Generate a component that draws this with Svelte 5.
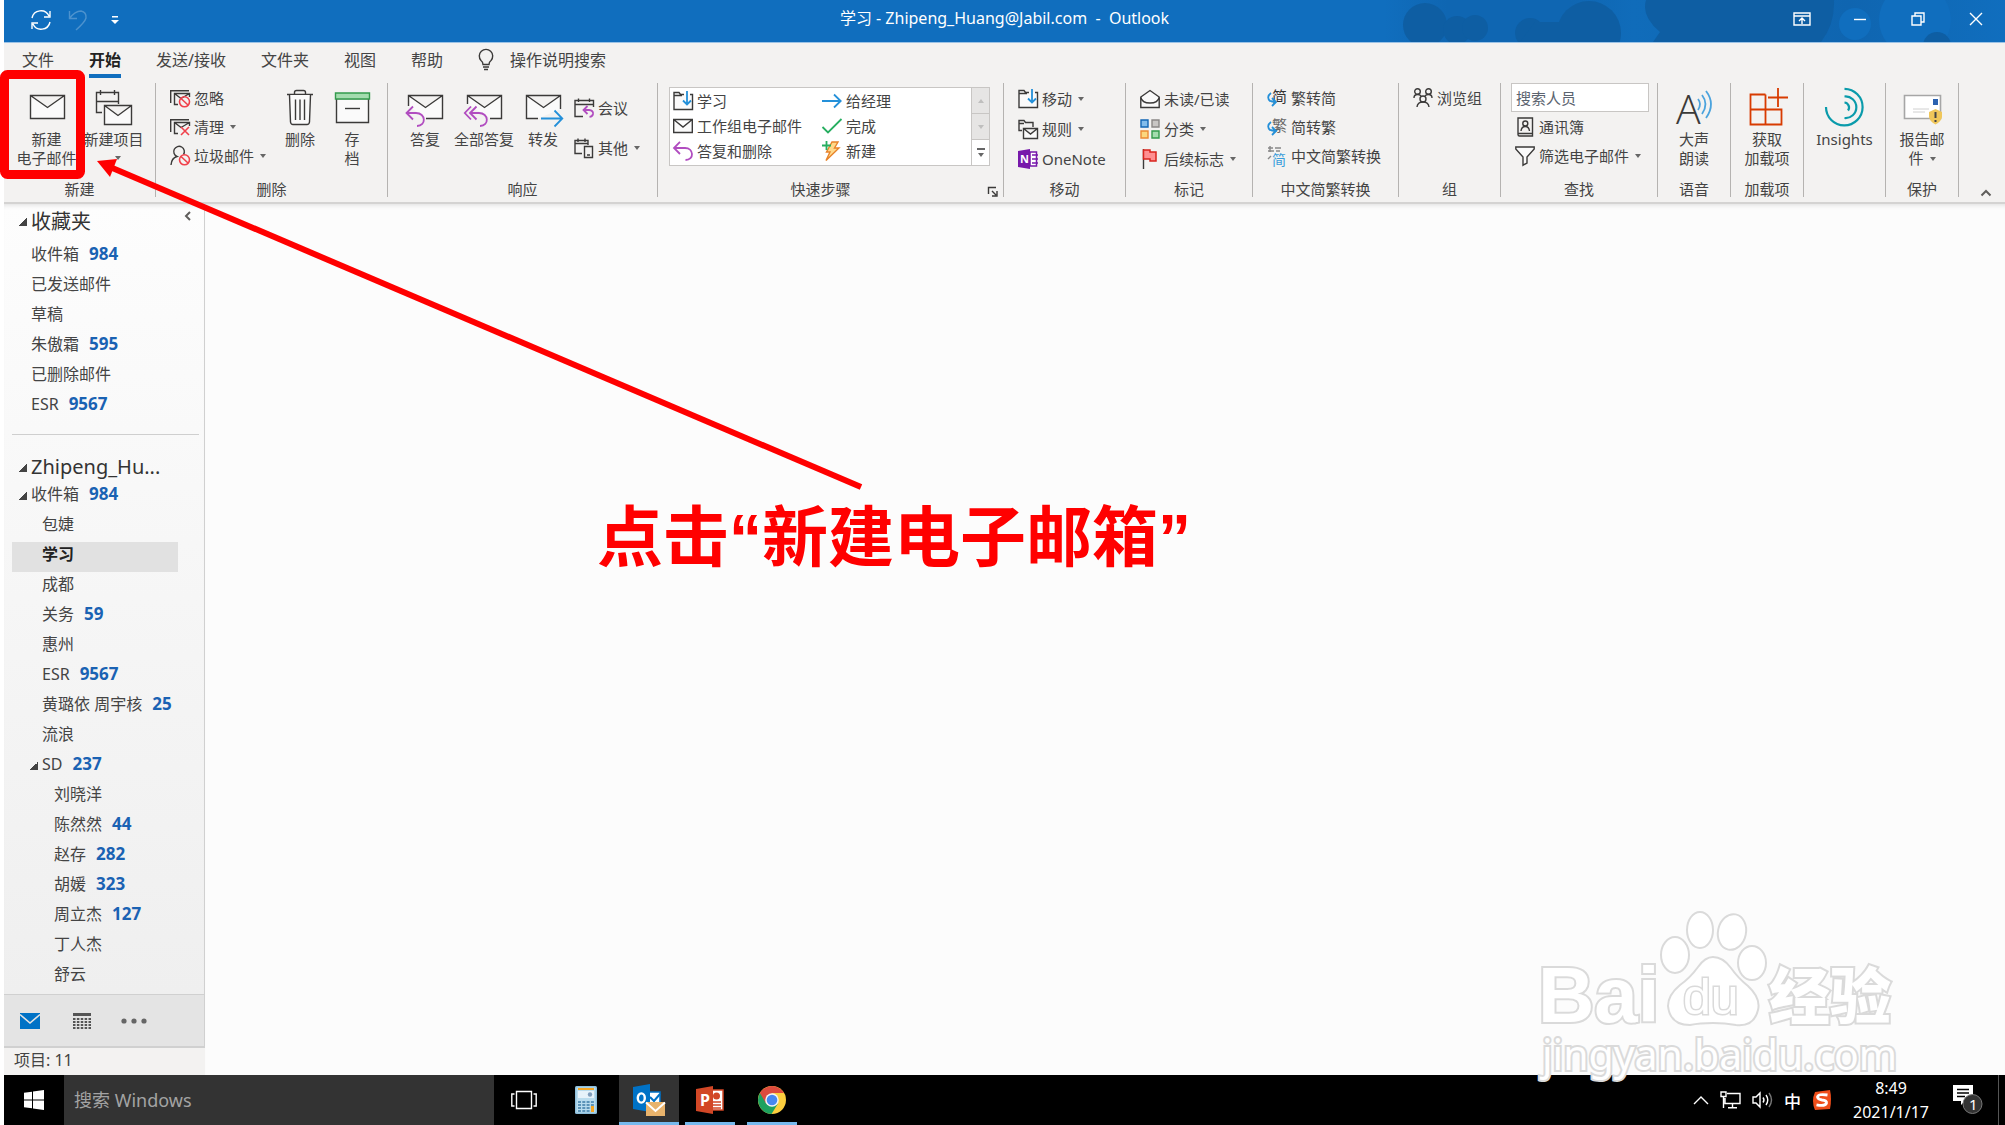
<script>
    const tabs = ["文件", "开始", "发送/接收", "文件夹", "视图", "帮助"];
    let activeTab = $state("开始");

    const quickSteps = [
        { icon: "moveTo", text: "学习" },
        { icon: "arrowRight", text: "给经理" },
        { icon: "mailSmall", text: "工作组电子邮件" },
        { icon: "check", text: "完成" },
        { icon: "replySmall", text: "答复和删除" },
        { icon: "bolt", text: "新建" },
    ];

    const favorites = [
        { name: "收件箱", count: 984 },
        { name: "已发送邮件" },
        { name: "草稿" },
        { name: "朱傲霜", count: 595 },
        { name: "已删除邮件" },
        { name: "ESR", count: 9567 },
    ];

    // level: indent depth, open: draws the expanded triangle
    const folders = [
        { name: "收件箱", count: 984, level: 0, open: true },
        { name: "包婕", level: 1 },
        { name: "学习", level: 1 },
        { name: "成都", level: 1 },
        { name: "关务", count: 59, level: 1 },
        { name: "惠州", level: 1 },
        { name: "ESR", count: 9567, level: 1 },
        { name: "黄璐依 周宇核", count: 25, level: 1 },
        { name: "流浪", level: 1 },
        { name: "SD", count: 237, level: 1, open: true },
        { name: "刘晓洋", level: 2 },
        { name: "陈然然", count: 44, level: 2 },
        { name: "赵存", count: 282, level: 2 },
        { name: "胡媛", count: 323, level: 2 },
        { name: "周立杰", count: 127, level: 2 },
        { name: "丁人杰", level: 2 },
        { name: "舒云", level: 2 },
    ];
    let selected = $state("学习");
</script>

{#snippet bigIcon(name)}
    <svg class="big-icon" viewBox="0 0 40 40" aria-hidden="true">
        {#if name === "mail"}
            <path class="ln paper" d="M3.5 8.5H37.5V31.5H3.5Z M3.5 8.5L20.5 20.5L37.5 8.5" />
        {:else if name === "newItems"}
            <path class="ln" d="M8 25.5H2.5V5.5H24.5V17 M2.5 14.5H24.5 M6.5 3V8 M20.5 3V8" />
            <path class="ln paper" d="M10.5 18.5H37.5V37.5H10.5Z M10.5 18.5L24 28.5L37.5 18.5" />
        {:else if name === "trash"}
            <path class="ln" d="M7 7.5H33 M14.5 7V5.5Q14.5 3.5 16.5 3.5H23.5Q25.5 3.5 25.5 5.5V7" />
            <path class="ln paper" d="M9.5 8L10.5 35Q10.8 37.5 13 37.5H27Q29.2 37.5 29.5 35L30.5 8" />
            <path class="ln" d="M15.5 12.5V33 M20 12.5V33 M24.5 12.5V33" />
        {:else if name === "archive"}
            <path class="ln paper" d="M4.5 11.5H36.5V35.5H4.5Z" />
            <path d="M3.5 6H37.5V12H3.5Z" fill="#a3dcae" stroke="#339a4c" stroke-width="1.4" />
            <path class="ln" d="M13 21.5H28" />
        {:else if name === "reply"}
            <path class="ln paper" d="M3.5 19V8.5H37.5V31.5H21 M3.5 8.5L20.5 20.5L37.5 8.5" />
            <path class="ln purple" d="M8 19.5L1.5 26L8 32.5 M1.5 26H11C21 26 21.5 39 12 39" />
        {:else if name === "replyAll"}
            <path class="ln paper" d="M3.5 17V8.5H37.5V31.5H26 M3.5 8.5L20.5 20.5L37.5 8.5" />
            <path class="ln purple" d="M7 19.5L.8 26L7 32.5 M12.5 19.5L6 26L12.5 32.5 M6 26H15C25 26 25.5 39 16 39" />
        {:else if name === "forward"}
            <path class="ln paper" d="M15 31.5H3.5V8.5H37.5V22 M3.5 8.5L20.5 20.5L37.5 8.5" />
            <path class="ln blue" d="M18 31.5H39 M31.5 23.5L39.3 31.5L31.5 39.5" />
        {:else if name === "speak"}
            <text x="2" y="37" class="letter-a">A</text>
            <path class="ln sky" d="M24 12Q28 17 24 23 M28 8Q35 17 28 27 M32 4Q42 17 32 31" />
        {:else if name === "addins"}
            <path class="ln orange" d="M18.5 7.5H3.5V37.5H34.5V22.5H3.5 M18.5 7.5V37.5 M31 1V20 M21 10.5H41" />
        {:else if name === "insights"}
            <path class="ln teal" d="M2 20A18.3 18.3 0 1 0 20.5 1.8 M20.5 9.5A10.8 10.8 0 1 1 20.5 31 M20.5 15.5A5 5 0 0 1 24 23.5" />
        {:else if name === "report"}
            <path d="M2.5 8.5H38.5V31.5H2.5Z" fill="#fff" stroke="#a6a6a6" stroke-width="1.6" />
            <path d="M11 22H27 M11 25H23" stroke="#d0d0d0" fill="none" />
            <path d="M31 12H36V18H31Z" fill="#2b62b0" />
            <path d="M33.5 22L40 25V30Q39 35 33.5 37.5Q28 35 27 30V25Z" fill="#f0c75a" />
            <path d="M33.5 25V31 M33.5 33V35" stroke="#444" stroke-width="2" />
        {/if}
    </svg>
{/snippet}

{#snippet smallIcon(name)}
    <svg class="small-icon" viewBox="0 0 20 20" aria-hidden="true">
        {#if name === "ignore" || name === "clean"}
            <path class="ln" d="M.7 15V2.7H19 M8 16.5H4.5V5.5H19.5V9 M4.5 5.5L11 10.5L19.5 5.5" />
            {#if name === "ignore"}
                <circle cx="14.5" cy="13.8" r="5" class="ln red" /><path class="ln red" d="M11 10.5L18 17" />
            {:else}
                <path class="ln red" d="M11 10L19 18 M19 10L11 18" />
            {/if}
        {:else if name === "junk"}
            <path class="ln" d="M1 19Q1.5 12 7 10.5A5.3 5.3 0 1 1 13.5 8.5" />
            <circle cx="14.5" cy="13.8" r="5" class="ln red" /><path class="ln red" d="M11 10.5L18 17" />
        {:else if name === "meeting"}
            <path class="ln" d="M9 18.5H1V2.5H19.5V9 M1 6.5H19.5 M4.5 .5V4 M15.5 .5V4" />
            <path class="ln purple" d="M13.5 8L9.5 12L13.5 16 M9.5 12H15Q19.5 12.5 19 16Q18.5 18.5 15.5 18.8" />
        {:else if name === "other"}
            <path class="ln" d="M8 15.5H1V2.5H14V7 M1 5.5H14 M4 .5V4 M11 .5V4 M10.5 8.5H18.5V19.5H10.5Z M13 17H16" />
        {:else if name === "move" || name === "moveTo"}
            <path class="ln paper" d="M11 3.5H7.5L6 1.5H1V18.5H19.5V3.5H17 M1 4.5H9" />
            <path class="ln blue" d="M14 0V13 M10 9.5L14 13.5L18 9.5" />
        {:else if name === "mailSmall"}
            <path class="ln paper" d="M.7 3.5H19.3V16.5H.7Z M.7 3.5L10 11L19.3 3.5" />
        {:else if name === "replySmall"}
            <path class="ln purple" d="M7 .8L1 7L7 13 M1 7H12C21 7 21.5 19 12.5 19" />
        {:else if name === "arrowRight"}
            <path class="ln blue" d="M0 10H18.5 M12 3.5L18.7 10L12 16.5" />
        {:else if name === "check"}
            <path class="ln green" d="M.5 11L6 16.5L19.5 3" />
        {:else if name === "bolt"}
            <path d="M10 1H16L12.5 7H17L4 19.5L8 11H4.5Z" fill="#ffd98a" stroke="#e8832a" stroke-width="1.4" />
            <path class="ln green" d="M4.5 0V9 M0 4.5H9" />
        {:else if name === "rules"}
            <path class="ln" d="M4 11.5H1V1.5H6L7.5 3.5H15V8 M1 4.5H6" />
            <path class="ln paper" d="M5.5 9.5H19.5V19.5H5.5Z M5.5 9.5L12.5 15L19.5 9.5" />
        {:else if name === "onenote"}
            <path d="M12 3H18.5V17H12Z" fill="#fff" stroke="#7719aa" stroke-width="1.5" />
            <path d="M14 6H20 M14 10H20 M14 14H20" stroke="#7719aa" stroke-width="1.5" />
            <path d="M0 2L12 0V20L0 18Z" fill="#7719aa" />
            <text x="2" y="14" fill="#fff" font-size="11" font-weight="700">N</text>
        {:else if name === "unread"}
            <path class="ln paper" d="M.8 8L10 1.5L19.2 8V18.5H.8Z" />
            <path class="ln" d="M.8 8.5Q2 14 10 14Q18 14 19.2 8.5" />
        {:else if name === "categories"}
            <path d="M1 1H8V8H1Z" fill="#83bdeb" stroke="#1367b5" stroke-width="1.4" />
            <path d="M12 1H19V8H12Z" fill="#c8c6c4" stroke="#8a8886" stroke-width="1.4" />
            <path d="M1 12H8V19H1Z" fill="#fbd77f" stroke="#ec8b33" stroke-width="1.4" />
            <path d="M12 12H19V19H12Z" fill="#a3dcae" stroke="#339a4c" stroke-width="1.4" />
        {:else if name === "flag"}
            <path class="ln" d="M3.5 0V20" />
            <path d="M3.5 1H10V3H16V12H10V10H3.5Z" fill="#ff8f91" stroke="#d9251d" stroke-width="1.5" />
        {:else if name === "toSimple"}
            <text x="5" y="14" font-size="15" fill="#333">简</text>
            <path class="ln blue" d="M4 5Q-1 9 3 13L8 14 M5 10L9 14L5 18" />
        {:else if name === "toTraditional"}
            <text x="5" y="14" font-size="15" fill="#666">繁</text>
            <path class="ln blue" d="M4 5Q-1 9 3 13L8 14 M5 10L9 14L5 18" />
        {:else if name === "convert"}
            <path d="M1 2H6 M1 5H7 M8 2H14 M9 5H13 M3 0V6 M1 13L4 10" fill="none" stroke="#888" stroke-width="1.4" />
            <text x="5" y="19" font-size="14" fill="#3a9ddb">简</text>
        {:else if name === "groups"}
            <path class="ln" d="M1 10Q1 6.5 4.5 6.5Q7 6.5 8 8 M19 10Q19 6.5 15.5 6.5Q13 6.5 12 8 M4 19Q4.5 14 10 14Q15.5 14 16 19" />
            <circle cx="4.5" cy="3.5" r="2.8" class="ln" /><circle cx="15.5" cy="3.5" r="2.8" class="ln" />
            <circle cx="10" cy="11" r="3" class="ln" />
        {:else if name === "book"}
            <path class="ln" d="M3 1H17.5V19H4.5Q3 19 3 17.5Z M3 16.5H17.5" />
            <circle cx="10.3" cy="6.5" r="2.5" class="ln" /><path class="ln" d="M6 14Q6.5 9.5 10.3 9.5Q14 9.5 14.5 14" />
        {:else if name === "filter"}
            <path class="ln paper" d="M.8 1H19.2V3L12 11V17L8 19.2V11L.8 3Z" />
        {/if}
    </svg>
{/snippet}

{#snippet big(icon, lines, caret = false)}
    <button class="big-btn" class:caret>
        {@render bigIcon(icon)}
        {#each lines as line}
            <span>{line}</span>
        {/each}
        {#if caret}<i class="drop"></i>{/if}
    </button>
{/snippet}

{#snippet small(icon, text, caret = false)}
    <button class="small-btn">
        {@render smallIcon(icon)}
        <span>{text}</span>
        {#if caret}<i class="drop"></i>{/if}
    </button>
{/snippet}

{#snippet folderRow(folder)}
    <button
        class="folder level-{folder.level ?? 0}"
        class:selected={folder.level && folder.name === selected}
        onclick={() => (selected = folder.name)}
    >
        <i class="tri" class:open={folder.open}></i>
        <span>{folder.name}</span>
        {#if folder.count}<b>{folder.count}</b>{/if}
    </button>
{/snippet}

<div class="page">
    <header class="titlebar">
        <svg class="clouds" viewBox="0 0 620 42" aria-hidden="true">
            <defs>
                <linearGradient id="sky">
                    <stop offset="0" stop-color="#106ebe" />
                    <stop offset="0.1" stop-color="#0f66b2" />
                    <stop offset="0.3" stop-color="#0f66b2" />
                    <stop offset="0.4" stop-color="#106cba" />
                    <stop offset="0.75" stop-color="#0f65b0" />
                    <stop offset="1" stop-color="#106ebe" />
                </linearGradient>
            </defs>
            <rect width="620" height="42" fill="url(#sky)" />
            <circle cx="40" cy="25" r="22" /><circle cx="72" cy="30" r="14" /><circle cx="90" cy="28" r="13" />
            <circle cx="145" cy="33" r="15" /><circle cx="204" cy="33" r="32" /><path d="M150 22H190V42H135Z" />
            <path d="M261 0H449Q450 24 436 42H268L275 32Q256 16 261 0Z" />
            <circle cx="470" cy="24" r="16" class="light" /><circle cx="530" cy="20" r="36" class="light" />
            <circle cx="552" cy="46" r="14" />
        </svg>
        <div class="quick-access">
            <button aria-label="发送/接收所有文件夹">
                <svg width="22" height="22" viewBox="0 0 22 22"><path class="white" d="M2 9A9 9 0 0 1 19 7 M20 2V8H14 M20 13A9 9 0 0 1 3 15 M2 20V14H8" /></svg>
            </button>
            <button aria-label="撤消" class="faded">
                <svg width="20" height="22" viewBox="0 0 20 22"><path class="white" d="M1.5 2V9.5H9 M1.5 9.5Q7 2 13 2Q18.5 3 18 9Q17 13 8 21" /></svg>
            </button>
            <button aria-label="自定义快速访问工具栏">
                <svg width="8" height="10" viewBox="0 0 8 10"><path fill="#fff" d="M1 1H7V2.5H1Z M0 5H8L4 9Z" /></svg>
            </button>
        </div>
        <h1>学习 - Zhipeng_Huang@Jabil.com&nbsp; -&nbsp; Outlook</h1>
        <div class="window-buttons">
            <button aria-label="功能区显示选项">
                <svg width="18" height="14" viewBox="0 0 18 14"><path class="white" d="M1 1H17V13H1Z M1 4H17 M9 12V6.5 M6 9L9 6L12 9" /></svg>
            </button>
            <button aria-label="最小化">
                <svg width="14" height="14" viewBox="0 0 14 14"><path class="white" d="M1 7.5H13" /></svg>
            </button>
            <button aria-label="还原">
                <svg width="14" height="14" viewBox="0 0 14 14"><path class="white" d="M1 4H10V13H1Z M4 4V1H13V10H10" /></svg>
            </button>
            <button aria-label="关闭">
                <svg width="14" height="14" viewBox="0 0 14 14"><path class="white" d="M1 1L13 13 M13 1L1 13" /></svg>
            </button>
        </div>
    </header>

    <nav class="tabs">
        {#each tabs as tab}
            <button class:active={tab === activeTab} onclick={() => (activeTab = tab)}>{tab}</button>
        {/each}
        <button class="tell-me">
            <svg width="16" height="22" viewBox="0 0 16 22" aria-hidden="true"><path class="ln" d="M5 15.5Q5 13 3 11.5A6.7 6.7 0 1 1 13 11.5Q11 13 11 15.5Z M5 18H11 M6 20.5H10" /></svg>
            操作说明搜索
        </button>
    </nav>

    <div class="ribbon">
        <section class="group g-new">
            <div class="items">
                {@render big("mail", ["新建", "电子邮件"])}
                {@render big("newItems", ["新建项目"], true)}
            </div>
            <h2>新建</h2>
        </section>
        <section class="group g-delete">
            <div class="items">
                <div class="stack">
                    {@render small("ignore", "忽略")}
                    {@render small("clean", "清理", true)}
                    {@render small("junk", "垃圾邮件", true)}
                </div>
                {@render big("trash", ["删除"])}
                {@render big("archive", ["存", "档"])}
            </div>
            <h2>删除</h2>
        </section>
        <section class="group g-respond">
            <div class="items">
                {@render big("reply", ["答复"])}
                {@render big("replyAll", ["全部答复"])}
                {@render big("forward", ["转发"])}
                <div class="stack loose">
                    {@render small("meeting", "会议")}
                    {@render small("other", "其他", true)}
                </div>
            </div>
            <h2>响应</h2>
        </section>
        <section class="group g-steps">
            <div class="items">
                <div class="steps">
                    <div class="steps-grid">
                        {#each quickSteps as step}
                            {@render small(step.icon, step.text)}
                        {/each}
                    </div>
                    <div class="steps-scroll">
                        <button aria-label="上一行"><i class="drop up"></i></button>
                        <button aria-label="下一行"><i class="drop"></i></button>
                        <button aria-label="其他" class="more"><i class="drop"></i></button>
                    </div>
                </div>
            </div>
            <h2>快速步骤</h2>
            <button class="launcher" aria-label="管理快速步骤">
                <svg width="10" height="10" viewBox="0 0 10 10"><path class="ln" d="M.5 7V.5H8 M4 4L8 8 M9 4V9H4" /></svg>
            </button>
        </section>
        <section class="group g-move">
            <div class="items">
                <div class="stack roomy">
                    {@render small("move", "移动", true)}
                    {@render small("rules", "规则", true)}
                    {@render small("onenote", "OneNote")}
                </div>
            </div>
            <h2>移动</h2>
        </section>
        <section class="group g-tags">
            <div class="items">
                <div class="stack roomy">
                    {@render small("unread", "未读/已读")}
                    {@render small("categories", "分类", true)}
                    {@render small("flag", "后续标志", true)}
                </div>
            </div>
            <h2>标记</h2>
        </section>
        <section class="group g-chinese">
            <div class="items">
                <div class="stack">
                    {@render small("toSimple", "繁转简")}
                    {@render small("toTraditional", "简转繁")}
                    {@render small("convert", "中文简繁转换")}
                </div>
            </div>
            <h2>中文简繁转换</h2>
        </section>
        <section class="group g-groups">
            <div class="items">
                <div class="stack">{@render small("groups", "浏览组")}</div>
            </div>
            <h2>组</h2>
        </section>
        <section class="group g-find">
            <div class="items">
                <div class="stack">
                    <input type="text" placeholder="搜索人员" aria-label="搜索人员" />
                    {@render small("book", "通讯簿")}
                    {@render small("filter", "筛选电子邮件", true)}
                </div>
            </div>
            <h2>查找</h2>
        </section>
        <section class="group g-single">
            <div class="items">{@render big("speak", ["大声", "朗读"])}</div>
            <h2>语音</h2>
        </section>
        <section class="group g-single">
            <div class="items">{@render big("addins", ["获取", "加载项"])}</div>
            <h2>加载项</h2>
        </section>
        <section class="group g-insights">
            <div class="items">{@render big("insights", ["Insights"])}</div>
        </section>
        <section class="group g-single">
            <div class="items">
                <button class="big-btn">
                    {@render bigIcon("report")}
                    <span>报告邮</span>
                    <span class="with-drop">件<i class="drop"></i></span>
                </button>
            </div>
            <h2>保护</h2>
        </section>
        <button class="collapse" aria-label="折叠功能区">
            <svg width="12" height="8" viewBox="0 0 12 8"><path class="ln thick" d="M1.5 6.5L6 2L10.5 6.5" /></svg>
        </button>
    </div>

    <main>
        <aside>
            <div class="folders">
                <div class="heading">
                    <i class="tri open"></i>
                    <span>收藏夹</span>
                    <button class="minimize" aria-label="最小化文件夹窗格">
                        <svg width="8" height="10" viewBox="0 0 8 10"><path class="ln thick" d="M6 1L2 5L6 9" /></svg>
                    </button>
                </div>
                {#each favorites as folder}
                    {@render folderRow(folder)}
                {/each}
                <hr />
                <div class="heading account"><i class="tri open"></i><span>Zhipeng_Hu...</span></div>
                {#each folders as folder}
                    {@render folderRow(folder)}
                {/each}
            </div>
            <div class="modules">
                <button aria-label="邮件">
                    <svg width="20" height="16" viewBox="0 0 20 16"><path fill="#0072c6" d="M0 0H20V16H0Z" /><path d="M0 1.5L10 10L20 1.5" fill="none" stroke="#e3e3e3" stroke-width="1.6" /></svg>
                </button>
                <button aria-label="日历">
                    <svg width="18" height="16" viewBox="0 0 18 16"><path fill="#555" d="M0 0H18V3H0Z" /><path d="M0 6H18 M0 9H18 M0 12H18 M0 15H18" stroke="#555" stroke-width="2" stroke-dasharray="2.5 1.375" /></svg>
                </button>
                <button aria-label="更多">
                    <svg width="26" height="6" viewBox="0 0 26 6"><g fill="#666"><circle cx="3" cy="3" r="2.6" /><circle cx="13" cy="3" r="2.6" /><circle cx="23" cy="3" r="2.6" /></g></svg>
                </button>
            </div>
            <div class="status">项目: 11</div>
        </aside>
        <div class="reading"></div>
    </main>

    <footer class="taskbar">
        <button class="start" aria-label="开始">
            <svg width="20" height="20" viewBox="0 0 20 20"><path fill="#fff" d="M0 2.8L8 1.7V9.5H0Z M9 1.5L20 0V9.5H9Z M0 10.5H8V18.3L0 17.2Z M9 10.5H20V20L9 18.5Z" /></svg>
        </button>
        <input type="search" placeholder="搜索 Windows" aria-label="搜索 Windows" />
        <div class="apps">
            <button aria-label="任务视图">
                <svg width="26" height="20" viewBox="0 0 26 20"><path class="white" d="M5.5 1.5H20.5V18.5H5.5Z M3.5 4H.8V16H3.5 M22.5 4H25.2V16H22.5" /></svg>
            </button>
            <button aria-label="计算器">
                <svg width="22" height="28" viewBox="0 0 22 28">
                    <rect width="22" height="28" rx="1.5" fill="#8fc0dc" /><rect x="1.5" y="1.5" width="19" height="25" fill="#b9dcee" />
                    <path fill="#f5a623" d="M3 2H19V4H3Z" /><rect x="3" y="5" width="16" height="7" fill="#e6f2fa" /><circle cx="15" cy="8.5" r="2.2" fill="#7f9dbb" />
                    <path d="M3 16H19 M3 19H19 M3 22H19 M3 25H19" stroke="#5b93b8" stroke-width="1.8" stroke-dasharray="3 1.3" />
                    <path fill="#f5a623" d="M16 20H19V26H16Z" />
                </svg>
            </button>
            <button aria-label="Outlook" class="running current">
                <svg width="32" height="32" viewBox="0 0 32 32">
                    <path fill="#fff" stroke="#0072c6" stroke-width="1.5" d="M14 8H27V23H14Z" /><path d="M17 13L21 17L27 10" fill="none" stroke="#0072c6" stroke-width="2" />
                    <path fill="#0072c6" d="M0 3L17 0V28L0 25Z" /><ellipse cx="8.3" cy="14" rx="3.5" ry="4.6" fill="none" stroke="#fff" stroke-width="2.4" />
                    <path fill="#e8b36c" d="M13 18H32V32H13Z" /><path d="M13 18.5L22.5 27L32 18.5" fill="none" stroke="#fff" stroke-width="2" />
                </svg>
            </button>
            <button aria-label="PowerPoint" class="running">
                <svg width="28" height="28" viewBox="0 0 28 28">
                    <path fill="#fff" stroke="#d24726" stroke-width="1.5" d="M14 4H27V24H14Z" /><circle cx="20.5" cy="10" r="3.5" fill="#d24726" />
                    <path d="M17 16H25 M17 19H25 M17 22H25" stroke="#d24726" stroke-width="1.5" />
                    <path fill="#d24726" d="M0 3L17 0V28L0 25Z" /><text x="4" y="20" fill="#fff" font-size="16" font-weight="700">P</text>
                </svg>
            </button>
            <button aria-label="Chrome" class="running">
                <svg width="28" height="28" viewBox="0 0 28 28">
                    <circle cx="14" cy="14" r="14" fill="#fcce3e" />
                    <path fill="#1da15f" d="M1.9 7A14 14 0 0 0 13.5 28L20 17.5L14 14Z" />
                    <path fill="#dd4b3e" d="M1.9 7L8 17.5L14 7H26.1A14 14 0 0 0 1.9 7Z" />
                    <circle cx="14" cy="14" r="6.8" fill="#f4f4f4" /><circle cx="14" cy="14" r="5.3" fill="#4688f1" />
                </svg>
            </button>
        </div>
        <div class="tray">
            <button aria-label="显示隐藏的图标">
                <svg width="16" height="10" viewBox="0 0 16 10"><path class="white" d="M1 9L8 2L15 9" /></svg>
            </button>
            <button aria-label="网络">
                <svg width="21" height="18" viewBox="0 0 21 18"><path class="white" d="M7 2.5H20V12.5H5V7 M12.5 12.5V16.5 M8 16.7H17 M1 1H6V5.5H1Z M3.5 5.5V17" /></svg>
            </button>
            <button aria-label="音量">
                <svg width="21" height="18" viewBox="0 0 21 18"><path class="white" d="M1 6H4L8 2V16L4 12H1Z M11 6.5Q13 9 11 11.5 M14 4Q17.5 9 14 14" /><path d="M17 2Q22 9 17 16" fill="none" stroke="#777" stroke-width="1.4" /></svg>
            </button>
            <button class="ime">中</button>
            <button aria-label="搜狗输入法">
                <svg width="20" height="20" viewBox="0 0 20 20"><path fill="#f04e1a" d="M3 2L18 0Q20 9 18 19L3 20Q-1 11 3 2Z" /><path d="M15.5 5Q6 3.5 5.5 7Q6 9.5 10 10Q15 10.5 14.5 13Q13.5 16.5 4.5 14.8" fill="none" stroke="#fff" stroke-width="2.8" /></svg>
            </button>
            <button class="clock"><span>8:49</span><span>2021/1/17</span></button>
            <button class="notify" aria-label="操作中心">
                <svg width="30" height="32" viewBox="0 0 30 32">
                    <path fill="#fff" d="M0 1H20V17H12L8 21V17H0Z" /><path d="M4 5.5H16 M4 9H16 M4 12.5H12" stroke="#000" stroke-width="1.5" />
                    <circle cx="19.5" cy="20" r="9.5" fill="#333" stroke="#777" /><text x="16" y="26" fill="#fff" font-size="15">1</text>
                </svg>
            </button>
        </div>
    </footer>

    <svg class="annotation" viewBox="0 0 1220 600" aria-hidden="true">
        <rect x="4.5" y="74.5" width="76" height="100" rx="3" />
        <path d="M110 167L861 487" class="shaft" />
        <path d="M97 161L117 159L110 177Z" class="head" />
    </svg>
    <p class="callout">点击“新建电子邮箱”</p>

    <svg class="watermark" viewBox="0 0 400 190" aria-hidden="true">
        <text x="18" y="132" class="latin" font-size="78">Bai</text>
        <ellipse cx="155" cy="65" rx="14" ry="18" />
        <ellipse cx="180" cy="40" rx="13" ry="18" />
        <ellipse cx="212" cy="42" rx="14" ry="18" transform="rotate(12 212 42)" />
        <ellipse cx="232" cy="73" rx="14" ry="17" />
        <path d="M193 67Q203 67 211 78Q218 88 228 96Q241 108 238 120Q234 137 216 135Q205 133 193 133Q180 133 170 135Q150 135 148 116Q148 105 160 95Q170 88 178 77Q185 67 193 67Z" />
        <text x="163" y="124" class="latin du" font-size="50">du</text>
        <text x="249" y="129" class="hanzi" font-size="61">经验</text>
        <text x="22" y="180" class="url" font-size="41">jingyan.baidu.com</text>
    </svg>
</div>

<style>
    :global(body) {
        background: #fff;
    }

    .page {
        position: relative;
        display: flex;
        flex-direction: column;
        min-height: 100vh;
        padding-left: 4px;
        box-sizing: border-box;
        overflow: hidden;
        font-family: "Noto Sans", "Noto Sans CJK SC", sans-serif;
        font-size: 15px;
        color: #444;
    }

    button {
        padding: 0;
        border: 0;
        background: none;
        font: inherit;
        color: inherit;
        white-space: nowrap;
    }

    svg {
        display: block;
        flex: none;
        overflow: visible;
    }

    h1,
    h2,
    p {
        margin: 0;
        font-weight: 400;
    }

    /* ── Icon strokes ── */
    .ln {
        fill: none;
        stroke: #3b3a39;
        stroke-width: 1.4;
    }

    .ln.paper {
        fill: #fafafa;
    }

    .ln.thick {
        stroke: #605e5c;
        stroke-width: 2;
    }

    .ln.purple {
        stroke: #b14dc0;
        stroke-width: 1.8;
    }

    .ln.blue {
        stroke: #2490d9;
        stroke-width: 1.8;
    }

    .ln.sky {
        stroke: #4ba3dd;
        stroke-width: 1.8;
    }

    .ln.green {
        stroke: #27ae60;
        stroke-width: 1.8;
    }

    .ln.red {
        stroke: #f0414b;
        stroke-width: 1.6;
    }

    .ln.orange {
        stroke: #d83b01;
        stroke-width: 1.8;
    }

    .ln.teal {
        stroke: #0a9bab;
        stroke-width: 2.2;
    }

    .white {
        fill: none;
        stroke: #fff;
        stroke-width: 1.4;
    }

    .letter-a {
        font-family: "Open Sans", sans-serif;
        font-size: 41px;
        font-weight: 300;
        fill: #3b3a39;
    }

    /* ── Title bar ── */
    .titlebar {
        position: relative;
        display: grid;
        grid-template-columns: 1fr auto 1fr;
        align-items: center;
        height: 43px;
        padding-bottom: 6px;
        box-sizing: border-box;
        background: #106ebe;
        border-bottom: 1px solid #9cc3e6;
        color: #fff;
    }

    .clouds {
        position: absolute;
        top: 0;
        right: 0;
        width: 620px;
        height: 42px;
        fill: #0e5ea3;
        overflow: hidden;
    }

    .clouds .light {
        fill: #106ebe;
    }

    .titlebar h1,
    .quick-access,
    .window-buttons {
        position: relative;
        font-size: 16px;
        line-height: 20px;
    }

    .quick-access {
        display: flex;
        align-items: center;
        gap: 16px;
        padding: 4px 0 0 26px;
    }

    .quick-access button:last-child {
        padding-left: 7px;
    }

    .faded {
        opacity: 0.25;
    }

    .window-buttons {
        display: flex;
        justify-content: flex-end;
        padding-top: 2px;
    }

    .window-buttons button {
        display: flex;
        justify-content: center;
        width: 58px;
    }

    /* ── Ribbon ── */
    .tabs {
        display: flex;
        align-items: flex-start;
        gap: 35px;
        height: 40px;
        padding: 3px 0 0 18px;
        box-sizing: border-box;
        background: #f3f2f1;
        font-size: 16px;
        line-height: 28px;
    }

    .tabs button {
        border-bottom: 4px solid transparent;
    }

    .tabs .active {
        border-color: #106ebe;
        color: #222;
        font-weight: 700;
    }

    .tell-me {
        display: flex;
        align-items: center;
        gap: 16px;
    }

    .ribbon {
        display: flex;
        padding-bottom: 5px;
        background: #f3f2f1;
        border-bottom: 2px solid #d4d3d2;
    }

    .group {
        position: relative;
        display: flex;
        flex-direction: column;
        flex: none;
        height: 114px;
        border-right: 1px solid #b5b3b1;
        box-sizing: border-box;
    }

    .items {
        display: flex;
        flex: 1;
    }

    .group h2 {
        font-size: 15px;
        line-height: 15px;
        text-align: center;
    }

    .g-new {
        width: 152px;
    }

    .g-new .items {
        padding-left: 9px;
    }

    .g-new .big-btn {
        width: 67px;
    }

    .g-delete {
        width: 232px;
    }

    .g-delete .items {
        padding-left: 14px;
        gap: 8px;
    }

    .g-delete .stack {
        width: 100px;
    }

    .g-respond {
        width: 270px;
    }

    .g-respond .items {
        padding-left: 15px;
        gap: 7px;
    }

    .g-steps {
        width: 346px;
    }

    .g-steps .items {
        padding: 4px 13px 0 11px;
    }

    .g-steps h2 {
        padding-right: 20px;
    }

    .g-move {
        width: 122px;
    }

    .g-tags {
        width: 127px;
    }

    .g-chinese {
        width: 146px;
    }

    .g-groups {
        width: 102px;
    }

    .g-move .items,
    .g-tags .items,
    .g-chinese .items,
    .g-groups .items {
        padding-left: 14px;
    }

    .g-find {
        width: 157px;
    }

    .g-find .items {
        padding-left: 10px;
    }

    .g-find .small-btn {
        padding-left: 4px;
    }

    .g-find input {
        width: 138px;
        height: 29px;
        padding: 0 4px;
        box-sizing: border-box;
        border: 1px solid #c8c6c4;
        background: #fff;
        font: inherit;
    }

    .g-find input::placeholder {
        color: #5c6470;
        opacity: 1;
    }

    .g-single {
        width: 73px;
    }

    .g-insights {
        width: 82px;
    }

    .g-single .items,
    .g-insights .items {
        justify-content: center;
    }

    .big-btn {
        display: flex;
        flex-direction: column;
        align-items: center;
        min-width: 44px;
        padding-top: 4px;
        line-height: 19px;
    }

    .big-icon {
        width: 40px;
        height: 40px;
        margin-bottom: 3px;
    }

    .big-btn.caret .drop {
        margin: 7px 0 0 8px;
    }

    .with-drop {
        display: flex;
        align-items: center;
        gap: 6px;
    }

    .drop {
        flex: none;
        width: 0;
        height: 0;
        border: 3px solid transparent;
        border-top: 4px solid #666;
        border-bottom: 0;
    }

    .drop.up {
        border-top: 0;
        border-bottom: 4px solid #666;
    }

    .stack {
        display: flex;
        flex-direction: column;
    }

    .small-btn {
        display: flex;
        align-items: center;
        gap: 4px;
        height: 29px;
        line-height: 20px;
    }

    .small-btn .drop {
        margin-left: 2px;
    }

    .small-icon {
        width: 20px;
        height: 20px;
    }

    .roomy {
        padding-top: 1px;
    }

    .roomy .small-btn {
        height: 30px;
    }

    .loose {
        padding: 5px 0 0 2px;
    }

    .loose .small-btn {
        height: 40px;
    }

    .steps {
        display: flex;
        flex: 1;
        height: 79px;
        box-sizing: border-box;
        border: 1px solid #c8c6c4;
        background: #fff;
    }

    .steps-grid {
        display: grid;
        grid-template-columns: 149px 1fr;
        align-content: start;
        flex: 1;
        padding-left: 3px;
    }

    .steps-grid .small-btn {
        height: 25px;
        line-height: 18px;
    }

    .steps-scroll {
        display: flex;
        flex-direction: column;
        width: 17px;
        border-left: 1px solid #c8c6c4;
    }

    .steps-scroll button {
        display: flex;
        flex: 1;
        flex-direction: column;
        align-items: center;
        justify-content: center;
        background: #e6e5e4;
        border-bottom: 1px solid #c8c6c4;
    }

    .steps-scroll button:not(.more) .drop {
        opacity: 0.3;
    }

    .steps-scroll .more {
        background: #fff;
        border-bottom: 0;
    }

    .more::before {
        content: "";
        width: 8px;
        height: 2px;
        margin-bottom: 3px;
        background: #666;
    }

    .launcher {
        position: absolute;
        right: 5px;
        bottom: 0;
    }

    .collapse {
        display: flex;
        flex: 1;
        align-items: flex-end;
        justify-content: center;
        padding-left: 8px;
    }

    /* ── Folder pane ── */
    main {
        display: flex;
        flex: 1;
        background: #fcfcfc;
    }

    aside {
        display: flex;
        flex-direction: column;
        width: 201px;
    }

    .reading {
        flex: 1;
    }

    .reading,
    .folders {
        box-shadow: inset 0 5px 5px -4px #ddd;
    }

    .folders {
        flex: 1;
        border-right: 1px solid #d0d0d0;
        background: linear-gradient(#fdfdfd, #efefef);
    }

    .heading,
    .folder {
        display: flex;
        align-items: center;
        height: 30px;
        padding-left: 15px;
    }

    .heading {
        height: 32px;
        margin-bottom: 6px;
        font-size: 20px;
        color: #333;
    }

    .account {
        margin-bottom: 0;
    }

    .minimize {
        margin: 0 12px 8px auto;
    }

    /* text rides slightly above the middle of the row */
    .folder {
        width: 166px;
        margin-left: 8px;
        padding: 0 0 6px 7px;
        box-sizing: content-box;
        height: 24px;
        width: 159px;
        font-size: 16px;
        line-height: 24px;
    }

    .folder b {
        margin-left: 10px;
        font-size: 17px;
        color: #1a62b3;
    }

    .level-1 {
        width: 148px;
        padding-left: 18px;
    }

    .level-2 {
        width: 136px;
        padding-left: 30px;
    }

    .selected {
        background: #e1e1e1;
        color: #222;
        font-weight: 700;
    }

    .tri {
        flex: none;
        width: 8px;
        height: 8px;
        margin-right: 4px;
    }

    .tri.open {
        margin-top: 4px;
        background: linear-gradient(135deg, transparent 50%, #444 50%);
    }

    hr {
        height: 1px;
        margin: 12px 5px 15px 8px;
        border: 0;
        background: #cfcfcf;
    }

    .modules {
        display: flex;
        align-items: center;
        height: 54px;
        border: 1px solid #d0d0d0;
        border-left: 0;
        border-bottom-width: 2px;
        box-sizing: border-box;
        background: #e4e4e4;
    }

    .modules button {
        display: flex;
        justify-content: center;
        width: 52px;
    }

    .status {
        height: 27px;
        padding-left: 10px;
        background: #f3f2f1;
        font-size: 16px;
        line-height: 25px;
    }

    /* ── Taskbar ── */
    .taskbar {
        display: flex;
        height: 50px;
        background: #000;
        color: #fff;
    }

    .start {
        display: flex;
        align-items: center;
        justify-content: center;
        width: 60px;
    }

    .taskbar input {
        width: 430px;
        padding: 0 10px;
        box-sizing: border-box;
        border: 0;
        background: #333;
        font: inherit;
        font-size: 18px;
        color: #fff;
    }

    .taskbar input::placeholder {
        color: #a3a3a3;
        opacity: 1;
    }

    .apps {
        display: flex;
        padding-left: 5px;
    }

    .apps button {
        display: flex;
        align-items: center;
        justify-content: center;
        width: 50px;
        margin-right: 12px;
        border-top: 3px solid transparent;
        border-bottom: 3px solid transparent;
        box-sizing: border-box;
    }

    .apps .running {
        border-bottom-color: #76b9ed;
    }

    .apps .current {
        width: 60px;
        margin: 0 6px 0 -4px;
        border-top-color: #333;
        background: #333;
    }

    .tray {
        display: flex;
        align-items: center;
        gap: 11px;
        margin: 0 6px 0 auto;
        padding-right: 15px;
        border-right: 1px solid #555;
    }

    .ime {
        font-size: 17px;
        font-weight: 500;
    }

    .tray .clock {
        display: flex;
        flex-direction: column;
        align-items: center;
        margin: 0 13px 0 10px;
        font-size: 16px;
        line-height: 24px;
    }

    /* ── Callout and watermark ── */
    .annotation {
        position: absolute;
        top: 0;
        left: 0;
        width: 1220px;
        height: 600px;
        fill: none;
        stroke: #f00;
        stroke-width: 9;
        pointer-events: none;
    }

    .shaft {
        stroke-width: 6;
    }

    .head {
        fill: #f00;
        stroke: none;
    }

    .callout {
        position: absolute;
        top: 498px;
        left: 597px;
        font-family: "Liberation Sans", "Noto Sans CJK SC", sans-serif;
        font-size: 66px;
        font-weight: 700;
        line-height: 80px;
        color: #f00;
        white-space: nowrap;
    }

    .watermark {
        position: absolute;
        right: 85px;
        bottom: 45px;
        width: 400px;
        height: 190px;
        fill: #fff;
        stroke: #dadada;
        stroke-width: 2;
        pointer-events: none;
    }

    .watermark text {
        paint-order: stroke;
        stroke-width: 4;
    }

    .latin {
        font-family: "Liberation Sans", sans-serif;
        font-weight: 700;
    }

    .watermark .du {
        font-weight: 400;
        stroke-width: 3;
    }

    .hanzi {
        font-weight: 900;
    }
</style>
